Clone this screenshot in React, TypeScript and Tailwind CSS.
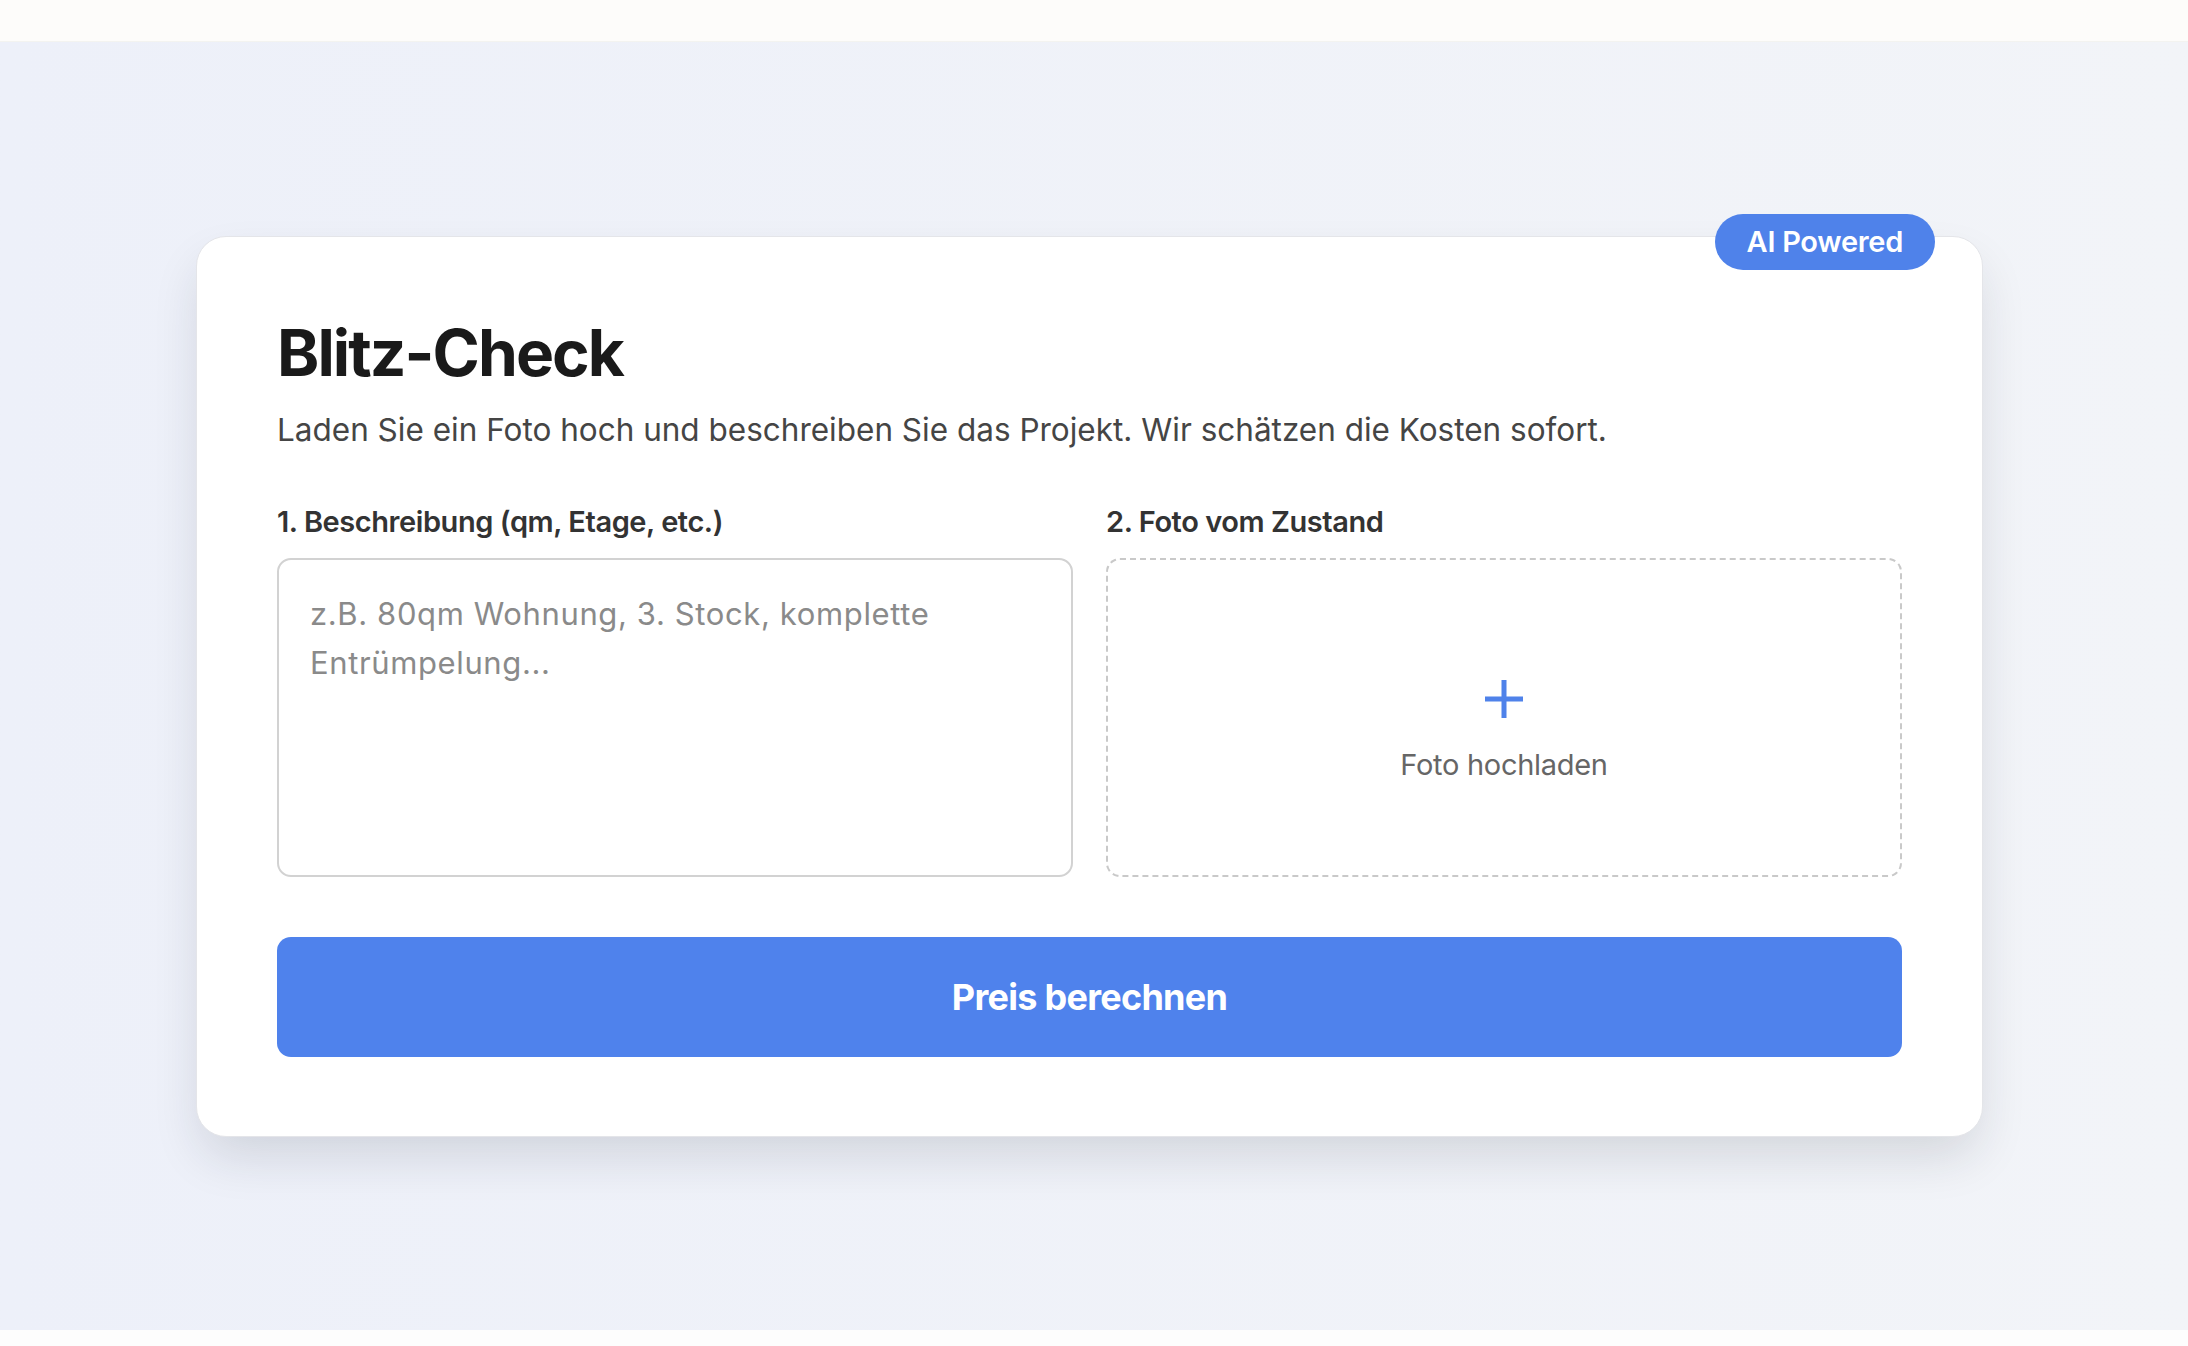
import { useState } from 'react';

const font = { fontFamily: 'Inter, "Noto Sans", sans-serif' };

function PlusIcon() {
  return (
    <svg width="38" height="38" viewBox="0 0 38 38" fill="none" stroke="#4f82ea" strokeWidth="5">
      <path d="M19 0v38M0 19h38" />
    </svg>
  );
}

export default function App() {
  const [text, setText] = useState('');

  return (
    <div className="min-h-screen flex flex-col" style={font}>
      {/* Kopfzeile (leer) */}
      <div className="h-[42px] bg-[#fdfcfa] border-b border-[#f3f3f0]" />

      {/* Blitz-Check Sektion */}
      <section className="h-[1288px] flex items-center pl-[196px] pr-[205px] bg-gradient-to-r from-[#edf0f9] to-[#f2f4f8]">
        <div className="relative flex-1 h-[901px] bg-white rounded-[30px] border border-[#e4e5e9] shadow-[0_24px_50px_-6px_rgba(30,35,50,0.14)] px-[80px] pt-[78px]">
          <span className="absolute -top-[23px] right-[47px] h-[56px] px-[32px] flex items-center rounded-full bg-[#4f82ea] text-white text-[29px] font-semibold tracking-[-0.01em]">
            AI Powered
          </span>

          <h2 className="text-[64px] leading-[1.2] font-bold text-[#1a1a1a] tracking-[-0.03em]">Blitz-Check</h2>
          <p className="mt-[15px] text-[31.5px] leading-[1.5] text-[#454545]">
            Laden Sie ein Foto hoch und beschreiben Sie das Projekt. Wir schätzen die Kosten sofort.
          </p>

          <div className="mt-[46px] grid grid-cols-2 gap-[33px]">
            <div className="flex flex-col">
              <label className="mb-[15px] text-[29px] leading-[1.5] font-semibold text-[#333] tracking-[-0.015em]">
                1. Beschreibung (qm, Etage, etc.)
              </label>
              <textarea
                value={text}
                onChange={(e) => setText(e.target.value)}
                placeholder="z.B. 80qm Wohnung, 3. Stock, komplette Entrümpelung..."
                className="h-[319px] resize-none rounded-[14px] border-2 border-[#d2d2d2] px-[31px] pt-[29px] pb-[30px] text-[31px] leading-[49px] text-[#333] placeholder:text-[#8a8a8a] outline-none tracking-[0.02em]"
              />
            </div>
            <div className="flex flex-col">
              <label className="mb-[15px] text-[29px] leading-[1.5] font-semibold text-[#333] tracking-[-0.015em]">
                2. Foto vom Zustand
              </label>
              <button className="h-[319px] rounded-[14px] border-2 border-dashed border-[#c9c9c9] flex flex-col items-center justify-center pt-[31px]">
                <PlusIcon />
                <span className="mt-[25px] text-[29px] leading-[1.5] text-[#666] tracking-[-0.01em]">Foto hochladen</span>
              </button>
            </div>
          </div>

          <button className="mt-[60px] w-full h-[120px] rounded-[14px] bg-[#4f82ec] text-white text-[36px] font-bold tracking-[-0.02em]">
            Preis berechnen
          </button>
        </div>
      </section>

      {/* Fußzeile */}
      <div className="h-[16px] bg-[#fdfdfd]" />
    </div>
  );
}
